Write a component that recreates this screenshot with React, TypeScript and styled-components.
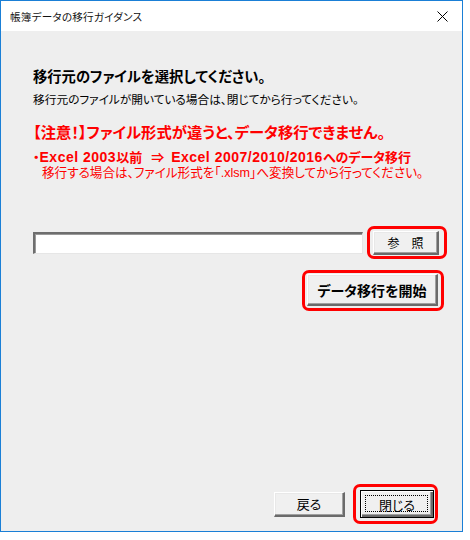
import React from "react";
import styled, { createGlobalStyle } from "styled-components";

const GlobalStyle = createGlobalStyle`
  html, body { margin: 0; padding: 0; background: #ffffff; }
  body {
    font-family: "Noto Sans CJK JP", "Noto Sans", sans-serif;
    font-feature-settings: "palt";
  }
`;

const FONT = `"Noto Sans CJK JP", "Noto Sans", sans-serif`;
const MIXED = `"Liberation Sans", "Noto Sans CJK JP", sans-serif`;

const Window = styled.div`
  width: 463px;
  height: 532px;
  box-sizing: border-box;
  border: 1px solid #1a7fd6;
  display: flex;
  flex-direction: column;
  background: #ffffff;
`;

const TitleBar = styled.div`
  height: 30px;
  flex: 0 0 30px;
  display: flex;
  align-items: center;
  justify-content: space-between;
  padding: 0 9px 0 9px;
  background: #ffffff;
`;

const TitleText = styled.span`
  font-family: ${FONT};
  font-size: 10.6px;
  color: #111;
  font-feature-settings: "palt";
  letter-spacing: 0.2px;
`;

const CloseIcon = styled.svg`
  width: 11px;
  height: 11px;
  margin-right: 5px;
`;

const Body = styled.div`
  flex: 1;
  display: flex;
  flex-direction: column;
  background: #eeeeee;
  padding: 36px 23px 13px 32px;
`;

const Text = styled.div<{
  $size: number;
  $lh: number;
  $bold?: boolean;
  $red?: boolean;
  $mt?: number;
  $indent?: number;
  $mixed?: boolean;
}>`
  font-family: ${(p) => (p.$mixed ? MIXED : FONT)};
  font-feature-settings: "palt";
  font-size: ${(p) => p.$size}px;
  line-height: ${(p) => p.$lh}px;
  font-weight: ${(p) => (p.$bold ? 700 : 400)};
  color: ${(p) => (p.$red ? "#ff0000" : "#000000")};
  margin-top: ${(p) => p.$mt ?? 0}px;
  padding-left: ${(p) => p.$indent ?? 0}px;
  white-space: nowrap;
`;

const Latin = styled.span`
  font-size: 14px;
  letter-spacing: 0.5px;
`;

const Arrow = styled.span`
  display: inline-block;
  margin: 0 7px 0 9px;
`;

const Row = styled.div<{ $mt?: number; $justify?: string; $gap?: number; $mr?: number }>`
  display: flex;
  align-items: center;
  justify-content: ${(p) => p.$justify ?? "flex-start"};
  gap: ${(p) => p.$gap ?? 0}px;
  margin-top: ${(p) => p.$mt ?? 0}px;
  margin-right: ${(p) => p.$mr ?? 0}px;
`;

const PathInput = styled.input`
  width: 330px;
  height: 22px;
  box-sizing: border-box;
  margin: 0;
  padding: 0 3px;
  background: #ffffff;
  border-style: solid;
  border-width: 2px 1px 1px 2px;
  border-color: #6e6e6e #e6e6e6 #e6e6e6 #6e6e6e;
  box-shadow: inset 1px 1px 0 #9a9a9a;
  outline: none;
`;

const Highlight = styled.span<{ $t: number; $r: number; $b: number; $l: number }>`
  position: relative;
  display: inline-flex;
  &::after {
    content: "";
    position: absolute;
    top: -${(p) => p.$t}px;
    right: -${(p) => p.$r}px;
    bottom: -${(p) => p.$b}px;
    left: -${(p) => p.$l}px;
    border: 3px solid #ff0000;
    border-radius: 7px;
    pointer-events: none;
  }
`;

const Button = styled.button<{ $w: number; $h: number; $bold?: boolean; $size?: number; $default?: boolean }>`
  position: relative;
  width: ${(p) => p.$w}px;
  height: ${(p) => p.$h}px;
  box-sizing: border-box;
  margin: 0;
  padding: 0;
  display: flex;
  align-items: center;
  justify-content: center;
  background: #f0f0f0;
  font-family: ${FONT};
  font-feature-settings: "palt";
  font-size: ${(p) => p.$size ?? 13}px;
  font-weight: ${(p) => (p.$bold ? 700 : 400)};
  color: #000;
  border-style: solid;
  border-width: ${(p) => (p.$default ? "1px" : "1px 2px 2px 1px")};
  border-color: ${(p) => (p.$default ? "#000000" : "#ffffff #6a6a6a #6a6a6a #ffffff")};
  box-shadow: ${(p) =>
    p.$default
      ? "inset 1px 1px 0 #ffffff, inset -2px -2px 0 #6a6a6a, inset -3px -3px 0 #a0a0a0"
      : "inset -1px -1px 0 #a0a0a0, inset 1px 1px 0 #e8e8e8"};
  &::before {
    content: "";
    display: ${(p) => (p.$default ? "block" : "none")};
    position: absolute;
    top: 4px;
    left: 4px;
    right: 5px;
    bottom: 5px;
    border: 1px dotted #000;
  }
`;

const Spacer = styled.div`
  flex: 1;
`;

export default function App() {
  return (
    <>
      <GlobalStyle />
      <Window>
        <TitleBar>
          <TitleText>帳簿データの移行ガイダンス</TitleText>
          <CloseIcon viewBox="0 0 11 11">
            <path d="M0.5 0.5 L10.5 10.5 M10.5 0.5 L0.5 10.5" stroke="#000" strokeWidth="1" fill="none" />
          </CloseIcon>
        </TitleBar>
        <Body>
          <Text $size={14.3} $lh={18} $bold>
            移行元のファイルを選択してください。
          </Text>
          <Text $size={11.7} $lh={16} $mt={6}>
            移行元のファイルが開いている場合は、閉じてから行ってください。
          </Text>
          <Text $size={15.3} $lh={18} $bold $red $mt={15}>
            【注意！】ファイル形式が違うと、データ移行できません。
          </Text>
          <Text $size={13} $lh={16} $bold $red $mt={9} $mixed>
            ・<Latin>Excel 2003</Latin>以前<Arrow>⇒</Arrow>
            <Latin>Excel 2007/2010/2016</Latin>へのデータ移行
          </Text>
          <Text $size={12.6} $lh={15} $red $indent={9} $mixed>
            移行する場合は、ファイル形式を「.xlsm」へ変換してから行ってください。
          </Text>
          <Row $mt={50} $justify="space-between">
            <PathInput type="text" defaultValue="" />
            <Highlight $t={5} $r={8} $b={4} $l={6}>
              <Button $w={66} $h={24} $size={12}>
                参　照
              </Button>
            </Highlight>
          </Row>
          <Row $mt={19} $justify="flex-end" $mr={1}>
            <Highlight $t={4} $r={6} $b={5} $l={5}>
              <Button $w={131} $h={32} $bold $size={14}>
                データ移行を開始
              </Button>
            </Highlight>
          </Row>
          <Spacer />
          <Row $justify="flex-end" $gap={15} $mr={5}>
            <Button $w={71} $h={25}>
              戻る
            </Button>
            <Highlight $t={6} $r={4} $b={6} $l={7}>
              <Button $w={74} $h={28} $default>
                閉じる
              </Button>
            </Highlight>
          </Row>
        </Body>
      </Window>
    </>
  );
}
